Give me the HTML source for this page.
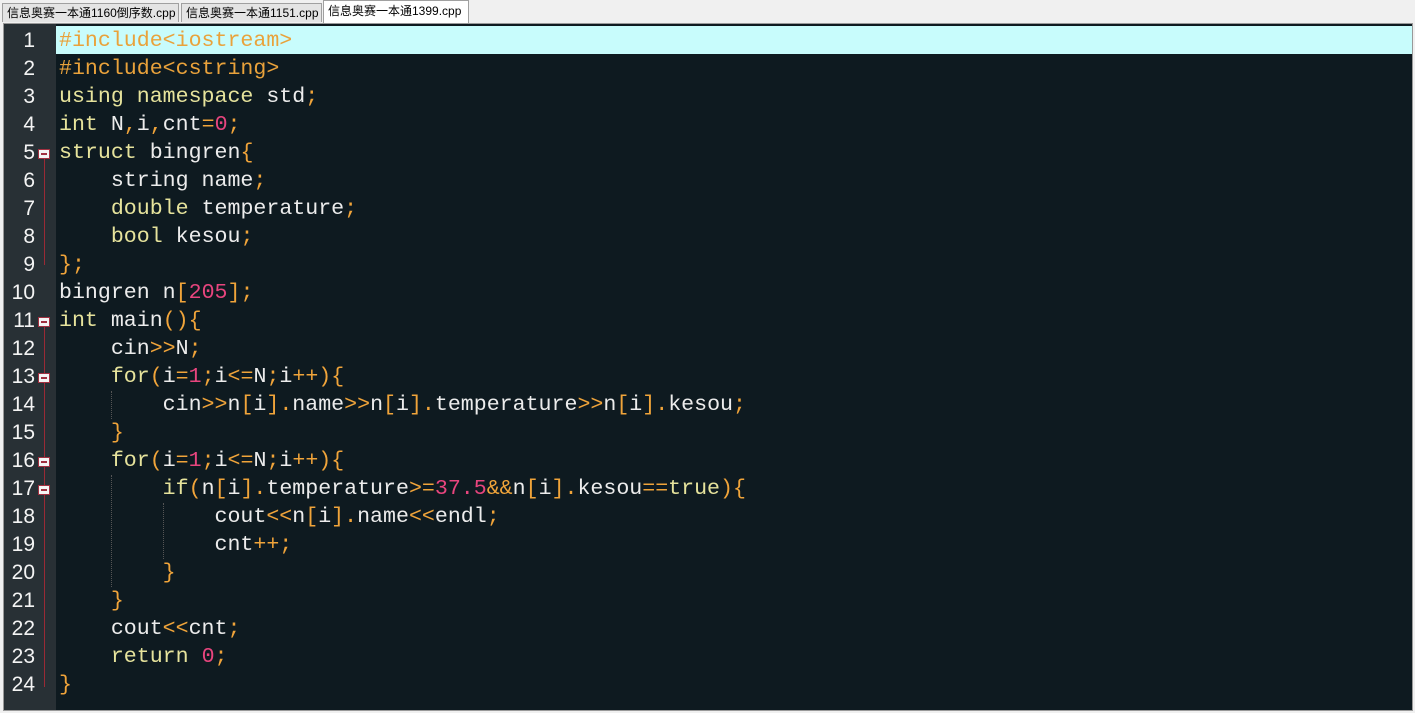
<!DOCTYPE html>
<html><head><meta charset="utf-8"><style>
body{margin:0;width:1415px;height:713px;background:#f0f0f0;overflow:hidden;position:relative;font-family:"Liberation Sans","Noto Sans CJK SC",sans-serif}
.tab{position:absolute;top:3px;height:19px;border:1px solid #a0a0a0;border-bottom:none;background:#e4e4e4;font-size:12px;line-height:19px;padding-left:4px;box-sizing:border-box;color:#000}
.tab.act{top:0;height:23px;background:#fff;line-height:21px}
#ed{position:absolute;left:3px;top:23px;width:1408px;height:686px;border:1px solid #999;background:#0e1a20;overflow:hidden}
#gut{position:absolute;left:0;top:0;width:52px;height:100%;background:#283035}
.ln{position:absolute;left:0;width:31px;text-align:right;color:#f4f4f4;font-family:"Liberation Sans",sans-serif;font-size:21px;height:28px;line-height:28px}
.code{position:absolute;left:55px;font-family:"Liberation Mono",monospace;font-size:21.6px;height:28px;line-height:28px;white-space:pre;color:#ececec}
.k{color:#e6e39c}.o{color:#f0a43a}.n{color:#e8457e}.p{color:#e9a23b}
.fold{position:absolute;left:34px;width:12px;height:10px;background:#f4f4f4;border:1px solid #a03040;box-sizing:border-box}
.fold:after{content:"";position:absolute;left:2px;top:3px;width:6px;height:2px;background:#a03040}
.vl{position:absolute;left:40px;width:1px;background:#9a2a35}
.guide{position:absolute;width:0;border-left:1px dotted #555}
</style></head><body>
<div class="tab" style="left:2px;width:177px">信息奥赛一本通1160倒序数.cpp</div>
<div class="tab" style="left:181px;width:141px">信息奥赛一本通1151.cpp</div>
<div class="tab act" style="left:323px;width:146px">信息奥赛一本通1399.cpp</div>
<div id="ed">
<div style="position:absolute;left:52px;top:2px;width:1356px;height:28px;background:#c8fcfc"></div>
<div id="gut"></div>
<div class="vl" style="top:135px;height:106px"></div>
<div class="vl" style="top:303px;height:360px"></div>
<div class="fold" style="top:125px"></div><div class="fold" style="top:293px"></div>
<div class="fold" style="top:349px"></div><div class="fold" style="top:433px"></div><div class="fold" style="top:461px"></div>
<div class="guide" style="left:107px;top:367px;height:28px"></div>
<div class="guide" style="left:107px;top:451px;height:112px"></div>
<div class="guide" style="left:159px;top:479px;height:56px"></div>
<div id="lines"></div>
</div>
<script>
var L=[
'<span class="p">#include&lt;iostream&gt;</span>',
'<span class="p">#include&lt;cstring&gt;</span>',
'<span class="k">using namespace</span> std<span class="o">;</span>',
'<span class="k">int</span> N<span class="o">,</span>i<span class="o">,</span>cnt<span class="o">=</span><span class="n">0</span><span class="o">;</span>',
'<span class="k">struct</span> bingren<span class="o">{</span>',
'    string name<span class="o">;</span>',
'    <span class="k">double</span> temperature<span class="o">;</span>',
'    <span class="k">bool</span> kesou<span class="o">;</span>',
'<span class="o">};</span>',
'bingren n<span class="o">[</span><span class="n">205</span><span class="o">];</span>',
'<span class="k">int</span> main<span class="o">(){</span>',
'    cin<span class="o">&gt;&gt;</span>N<span class="o">;</span>',
'    <span class="k">for</span><span class="o">(</span>i<span class="o">=</span><span class="n">1</span><span class="o">;</span>i<span class="o">&lt;=</span>N<span class="o">;</span>i<span class="o">++){</span>',
'        cin<span class="o">&gt;&gt;</span>n<span class="o">[</span>i<span class="o">].</span>name<span class="o">&gt;&gt;</span>n<span class="o">[</span>i<span class="o">].</span>temperature<span class="o">&gt;&gt;</span>n<span class="o">[</span>i<span class="o">].</span>kesou<span class="o">;</span>',
'    <span class="o">}</span>',
'    <span class="k">for</span><span class="o">(</span>i<span class="o">=</span><span class="n">1</span><span class="o">;</span>i<span class="o">&lt;=</span>N<span class="o">;</span>i<span class="o">++){</span>',
'        <span class="k">if</span><span class="o">(</span>n<span class="o">[</span>i<span class="o">].</span>temperature<span class="o">&gt;=</span><span class="n">37.5</span><span class="o">&amp;&amp;</span>n<span class="o">[</span>i<span class="o">].</span>kesou<span class="o">==</span><span class="k">true</span><span class="o">){</span>',
'            cout<span class="o">&lt;&lt;</span>n<span class="o">[</span>i<span class="o">].</span>name<span class="o">&lt;&lt;</span>endl<span class="o">;</span>',
'            cnt<span class="o">++;</span>',
'        <span class="o">}</span>',
'    <span class="o">}</span>',
'    cout<span class="o">&lt;&lt;</span>cnt<span class="o">;</span>',
'    <span class="k">return</span> <span class="n">0</span><span class="o">;</span>',
'<span class="o">}</span>'];
var h='';for(var i=0;i<L.length;i++){var t=3+i*28;h+='<div class="ln" style="top:'+t+'px">'+(i+1)+'</div><div class="code" style="top:'+t+'px">'+L[i]+'</div>';}
document.getElementById('lines').innerHTML=h;
</script>
</body></html>
